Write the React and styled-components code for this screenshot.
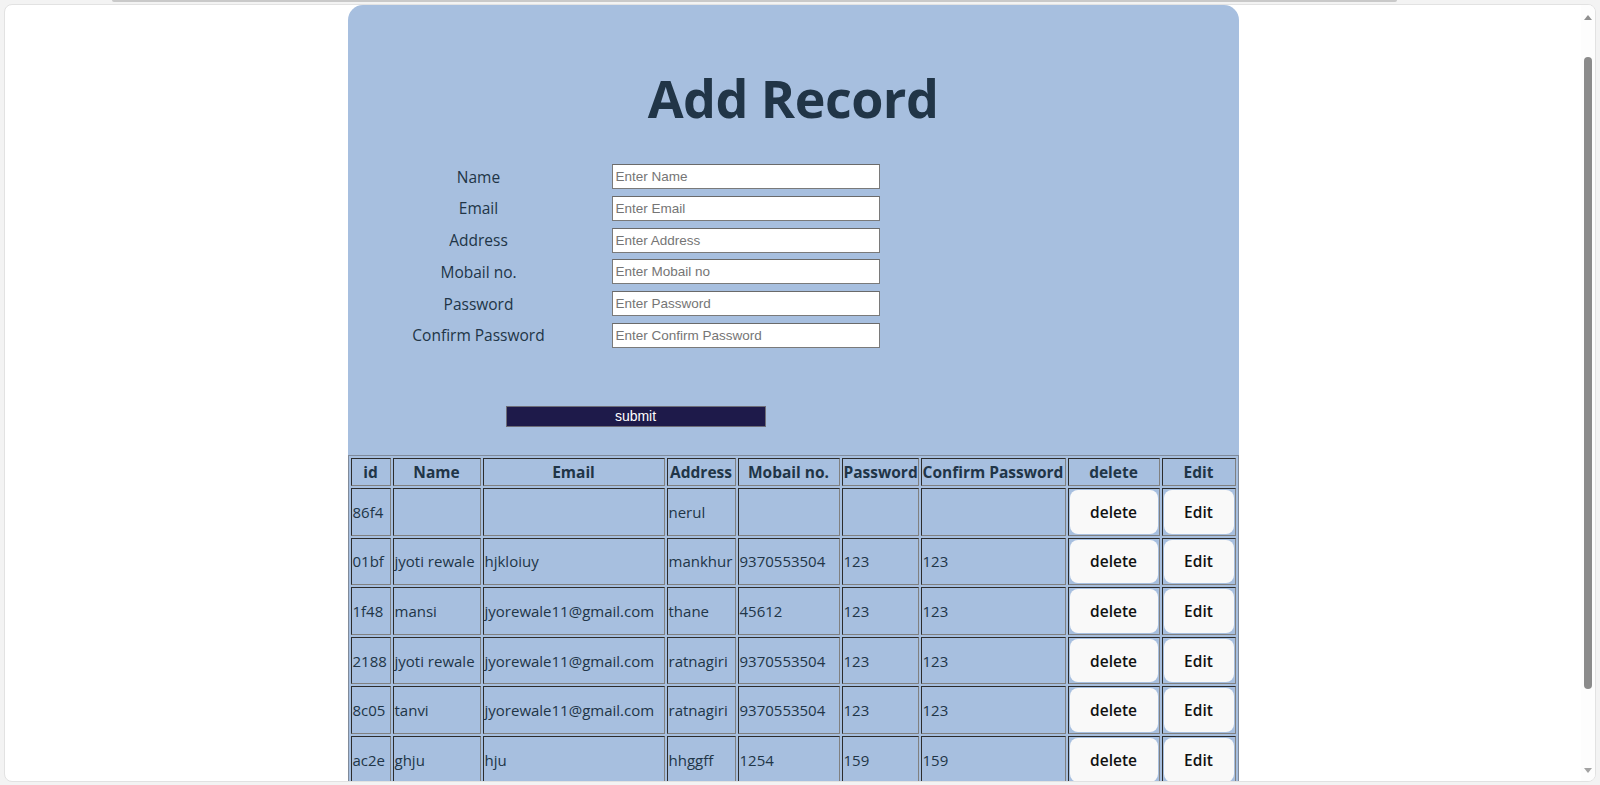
import React from 'react';
import styled, { createGlobalStyle } from 'styled-components';

const GlobalStyle = createGlobalStyle`
  html, body {
    margin: 0;
    padding: 0;
    height: 100%;
    overflow: hidden;
  }
  body {
    background: #f3f3f3;
    font-family: "Open Sans", "Noto Sans", sans-serif;
  }
`;

const Screen = styled.div`
  height: 785px;
  box-sizing: border-box;
  display: flex;
  flex-direction: column;
  padding: 0 4px 3px 4px;
`;

const ChromeEdge = styled.div`
  height: 4px;
  flex-shrink: 0;
`;

const ChromeLine = styled.div`
  margin-left: 108px;
  width: 1285px;
  height: 2px;
  background: #c9c9c9;
  border-radius: 0 0 2px 2px;
`;

const Frame = styled.div`
  flex: 1;
  min-height: 0;
  display: flex;
  background: #fff;
  border: 1px solid #e2e2e2;
  border-radius: 8px;
  overflow: hidden;
`;

const Page = styled.main`
  flex: 1;
  min-width: 0;
  overflow: hidden;
  display: flex;
  justify-content: center;
  align-items: flex-start;
`;

const Card = styled.section`
  width: 891px;
  flex-shrink: 0;
  background: #a7bfdf;
  border-radius: 15px;
  color: #213547;
  padding: 63px 0 20px;
`;

const Title = styled.h1`
  margin: 0 0 36px;
  text-align: center;
  font-size: 52px;
  line-height: 60px;
  font-weight: 700;
  letter-spacing: -0.5px;
`;

const FormGrid = styled.div`
  display: grid;
  grid-template-columns: 134px 268px;
  column-gap: 66px;
  row-gap: 6.8px;
  margin-left: 64px;
  align-items: center;
`;

const Label = styled.label`
  text-align: center;
  font-size: 15.5px;
  line-height: 24px;
  white-space: nowrap;
`;

const Input = styled.input`
  box-sizing: border-box;
  width: 268px;
  height: 25px;
  margin: 0;
  padding: 0 3px;
  border: 1px solid #7a7a7a;
  border-top-color: #6a6a6a;
  background: #fff;
  font-family: "Liberation Sans", Arial, sans-serif;
  font-size: 13.5px;
  color: #222;
  outline: none;

  &::placeholder {
    color: #757575;
  }
`;

const SubmitButton = styled.button`
  display: block;
  box-sizing: border-box;
  width: 260px;
  height: 21px;
  margin: 58px 0 28px 158px;
  padding: 0;
  background: #1e1a4a;
  border: 1px solid #6d6d78;
  color: #fff;
  font-family: "Liberation Sans", Arial, sans-serif;
  font-size: 14px;
  line-height: 19px;
`;

const Table = styled.table`
  width: 100%;
  table-layout: fixed;
  border-collapse: separate;
  border-spacing: 2px;
  border: 1px solid #7f8a9a;
  font-size: 15px;
`;

const HeadCell = styled.th`
  box-sizing: border-box;
  width: ${p => p.$w}px;
  padding: 1px;
  border: 1px inset #808080;
  line-height: 24px;
  font-size: 15.5px;
  font-weight: 700;
  text-align: center;
  white-space: nowrap;
  overflow: hidden;
`;

const Cell = styled.td`
  padding: 1px;
  border: 1px inset #808080;
  line-height: 24px;
  text-align: left;
  vertical-align: middle;
  white-space: nowrap;
  overflow: hidden;
`;

const RowButton = styled.button`
  display: block;
  box-sizing: border-box;
  width: 100%;
  height: 43.6px;
  margin: 0;
  padding: 0;
  border: 1px solid transparent;
  border-radius: 8px;
  background: #f9f9f9;
  color: #111;
  font-family: inherit;
  font-size: 15.5px;
  font-weight: 600;
  cursor: pointer;
`;

const Scrollbar = styled.div`
  width: 14px;
  flex-shrink: 0;
  display: flex;
  flex-direction: column;
  align-items: center;
  background: #fdfdfd;
`;

const Arrow = styled.div`
  width: 0;
  height: 0;
  border-left: 4.5px solid transparent;
  border-right: 4.5px solid transparent;
  ${p => (p.$down
    ? 'border-top: 5px solid #a3a3a3; margin-top: auto; margin-bottom: 8px;'
    : 'border-bottom: 5px solid #8f8f8f; margin-top: 10px;')}
`;

const Thumb = styled.div`
  width: 8px;
  height: 632px;
  margin-top: 37px;
  border-radius: 4px;
  background: #8b8b8b;
`;

const columns = [
  { label: 'id', w: 40 },
  { label: 'Name', w: 88 },
  { label: 'Email', w: 182 },
  { label: 'Address', w: 69 },
  { label: 'Mobail no.', w: 102 },
  { label: 'Password', w: 77 },
  { label: 'Confirm Password', w: 145 },
  { label: 'delete', w: 92 },
  { label: 'Edit', w: 74 },
];

const records = [
  { id: '86f4', name: '', email: '', address: 'nerul', mobile: '', password: '', confirm: '' },
  { id: '01bf', name: 'jyoti rewale', email: 'hjkloiuy', address: 'mankhur', mobile: '9370553504', password: '123', confirm: '123' },
  { id: '1f48', name: 'mansi', email: 'jyorewale11@gmail.com', address: 'thane', mobile: '45612', password: '123', confirm: '123' },
  { id: '2188', name: 'jyoti rewale', email: 'jyorewale11@gmail.com', address: 'ratnagiri', mobile: '9370553504', password: '123', confirm: '123' },
  { id: '8c05', name: 'tanvi', email: 'jyorewale11@gmail.com', address: 'ratnagiri', mobile: '9370553504', password: '123', confirm: '123' },
  { id: 'ac2e', name: 'ghju', email: 'hju', address: 'hhggff', mobile: '1254', password: '159', confirm: '159' },
];

const fields = [
  { label: 'Name', placeholder: 'Enter Name' },
  { label: 'Email', placeholder: 'Enter Email' },
  { label: 'Address', placeholder: 'Enter Address' },
  { label: 'Mobail no.', placeholder: 'Enter Mobail no' },
  { label: 'Password', placeholder: 'Enter Password' },
  { label: 'Confirm Password', placeholder: 'Enter Confirm Password' },
];

const App = () => {
  return (
    <>
      <GlobalStyle />
      <Screen>
        <ChromeEdge>
          <ChromeLine />
        </ChromeEdge>
        <Frame>
          <Page>
            <Card>
              <Title>Add Record</Title>
              <FormGrid>
                {fields.map(f => (
                  <React.Fragment key={f.label}>
                    <Label>{f.label}</Label>
                    <Input placeholder={f.placeholder} />
                  </React.Fragment>
                ))}
              </FormGrid>
              <SubmitButton>submit</SubmitButton>
              <Table>
                <thead>
                  <tr>
                    {columns.map(c => (
                      <HeadCell key={c.label} $w={c.w}>{c.label}</HeadCell>
                    ))}
                  </tr>
                </thead>
                <tbody>
                  {records.map(r => (
                    <tr key={r.id}>
                      <Cell>{r.id}</Cell>
                      <Cell>{r.name}</Cell>
                      <Cell>{r.email}</Cell>
                      <Cell>{r.address}</Cell>
                      <Cell>{r.mobile}</Cell>
                      <Cell>{r.password}</Cell>
                      <Cell>{r.confirm}</Cell>
                      <Cell><RowButton>delete</RowButton></Cell>
                      <Cell><RowButton>Edit</RowButton></Cell>
                    </tr>
                  ))}
                </tbody>
              </Table>
            </Card>
          </Page>
          <Scrollbar>
            <Arrow />
            <Thumb />
            <Arrow $down />
          </Scrollbar>
        </Frame>
      </Screen>
    </>
  );
};

export default App;
